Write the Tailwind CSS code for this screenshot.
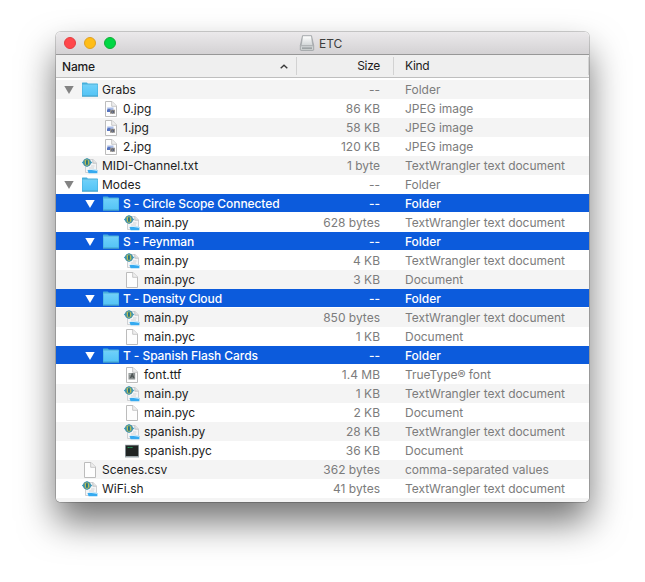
<!DOCTYPE html>
<html lang="en">
<head>
<meta charset="utf-8">
<title>ETC</title>
<script src="https://cdn.jsdelivr.net/npm/@tailwindcss/browser@4"></script>
</head>
<body class="h-[582px] w-[645px] overflow-hidden bg-white pt-8 pl-14 font-['Inter','Liberation_Sans',sans-serif] text-[12px] text-[#1c1c1c]">
<svg class="absolute size-0">
  <linearGradient id="fg" x2="0" y2="1"><stop stop-color="#6dd0fa"/><stop offset="1" stop-color="#55c4f5"/></linearGradient>
  <linearGradient id="dg" x2="0" y2="1"><stop stop-color="#fff"/><stop offset="1" stop-color="#d3d7d8"/></linearGradient>
  <symbol id="folder" viewBox="0 0 18 18"><path d="M1 15.5V2.1Q1 1.5 1.6 1.5H5.5Q6.2 1.5 6.8 2.5H16.2Q17 2.5 17 3.2V15.5Z" fill="#46afdc"/><path d="M1.6 4.3H16.4V14.6H1.6Z" fill="url(#fg)"/><path d="M1.4 4H16.6" stroke="#8edcfb" stroke-width=".7"/><path d="M1 15.2H17" stroke="#469fc8" stroke-width=".8"/></symbol>
  <symbol id="doc" viewBox="0 0 18 18"><path d="M3.5 1.5H10L14.5 6V16.5H3.5Z" fill="#fdfdfd" stroke="#bcbcbc"/><path d="M9.7 1.5V6.3H14.5" fill="#eee" stroke="#c2c2c2" stroke-width=".9"/></symbol>
  <symbol id="jpg" viewBox="0 0 18 18"><use href="#doc"/><path d="M5.2 7.5H11.5V12H5.2Z" fill="#a9bce6"/><path d="M5 9.8L7 8.7 9.5 10V12H5Z" fill="#5673bf"/><path d="M8.5 9.7H13V13.7H8V11Z" fill="#96928e"/><circle cx="10.7" cy="12" r="1.4" fill="#50566a"/><circle cx="10.7" cy="12" r=".6" fill="#aab6ce"/></symbol>
  <symbol id="font" viewBox="0 0 18 18"><use href="#doc"/><path d="M5.5 7H12.2V13.5H5.5Z" fill="#8b9090"/><path d="M7.5 12L9.2 8 11 12M8 10.8H10.5" fill="none" stroke="#4b5252" stroke-width="1.1"/><path d="M6 7.5H8V9H6Z" fill="#a3abab"/></symbol>
  <symbol id="tw" viewBox="0 0 18 18"><path d="M4.5 2.5H12.2L15.5 6V15.5H4.5Z" fill="#f4f5f6" stroke="#c4c7ca" stroke-width=".8"/><path d="M11.8 2.5V6.2H15.3" fill="#e3e3e3" stroke="#b7babd" stroke-width=".8"/><path d="M10 9H13.5M8 11H13" stroke="#c3c8cc" stroke-width=".7"/><path d="M6.5 13H16.4V16.3H7.6Z" fill="#35aaf0"/><path d="M6 13.2L8 12.5 16 13.9V12.6L13 12.2Z" fill="#b5e2fa"/><path d="M6 .9L11.2 5.5 6 10.1.8 5.5Z" fill="#2b9bc8"/><circle cx="6" cy="5.5" r="3.9" fill="#4a94a5"/><path d="M3.7 3.3Q5.7 1.6 8 3.5L8.4 7 6 9 4 7.5Z" fill="#b8bd55"/><path d="M5 3.3H6.9V7.8H5Z" fill="#1f7288"/></symbol>
  <symbol id="term" viewBox="0 0 18 18"><path d="M2 2.7H16V15.5H2Z" fill="#9aa5aa"/><path d="M2.8 3.5H15.2V14H2.8Z" fill="#202423"/><path d="M4.6 5.5H9.5" stroke="#20a55d" stroke-width="1" stroke-dasharray="1.3 .5"/></symbol>
</svg>

<main class="h-[470px] w-[533px] rounded-[5px] shadow-[0_0_0_1px_rgba(0,0,0,0.18),0_20px_36px_rgba(0,0,0,0.55)]">
  <div class="flex h-full flex-col overflow-hidden rounded-[5px] bg-white">
    <header class="grid h-[23px] shrink-0 grid-cols-[244px_1fr] items-center border-b border-[#979797] bg-gradient-to-b from-[#ebe9eb] to-[#d4d2d4]">
      <div class="flex gap-2 pl-2">
        <i class="size-3 rounded-full border border-[#e33e42] bg-[#ff474b]"></i>
        <i class="size-3 rounded-full border border-[#dfa023] bg-[#ffbd17]"></i>
        <i class="size-3 rounded-full border border-[#12ac36] bg-[#00d744]"></i>
      </div>
      <div class="flex items-center">
        <svg class="-ml-px h-4 w-4" viewBox="0 0 16 16"><path d="M3.5.7H12.5L14.7 10.5V14.5Q14.7 15.4 13.8 15.4H2.2Q1.3 15.4 1.3 14.5V10.5Z" fill="#b1b5b7" stroke="#999ea0" stroke-width=".7"/><path d="M4 1.2H12L13.2 10H2.8Z" fill="url(#dg)"/><path d="M1.9 11.3H14.1V14.8H1.9Z" fill="#d0d4d5"/><path d="M3 13.1H13" stroke="#7c8385"/></svg>
        <span class="ml-[4px] pt-[2px] text-[#3d3d3d]">ETC</span>
      </div>
    </header>
    <div class="grid h-[23px] shrink-0 grid-cols-[241px_97px_1fr] items-center border-b border-[#bebebe] bg-[#efefef] font-medium">
      <div class="flex h-[18px] items-center justify-between border-r border-[#d2d2d2] pt-px pr-2 pl-[6px]"><span class="tracking-[-0.2px]">Name</span><svg class="h-[5px] w-2" viewBox="0 0 8 5"><path d="M.7 4.3L4 1.2 7.3 4.3" fill="none" stroke="#393939" stroke-width="1.4"/></svg></div>
      <div class="flex h-[18px] items-center justify-end border-r border-[#d2d2d2] pr-[13px] font-normal tracking-[-0.3px]">Size</div>
      <div class="flex h-[18px] items-center border-r border-[#d2d2d2] pl-[11px] font-normal tracking-[-0.3px]">Kind</div>
    </div>
    <div id="rows" class="pt-[2px]"></div>
    <div class="flex-1 bg-[#f4f4f4]"></div>
  </div>
</main>
<script>
const files = [
  [0,'folder','Grabs','--','Folder'],
  [1,'jpg','0.jpg','86 KB','JPEG image'],
  [1,'jpg','1.jpg','58 KB','JPEG image'],
  [1,'jpg','2.jpg','120 KB','JPEG image'],
  [0,'tw','MIDI-Channel.txt','1 byte','TextWrangler text document'],
  [0,'folder','Modes','--','Folder'],
  [1,'folder','S - Circle Scope Connected','--','Folder',1],
  [2,'tw','main.py','628 bytes','TextWrangler text document'],
  [1,'folder','S - Feynman','--','Folder',1],
  [2,'tw','main.py','4 KB','TextWrangler text document'],
  [2,'doc','main.pyc','3 KB','Document'],
  [1,'folder','T - Density Cloud','--','Folder',1],
  [2,'tw','main.py','850 bytes','TextWrangler text document'],
  [2,'doc','main.pyc','1 KB','Document'],
  [1,'folder','T - Spanish Flash Cards','--','Folder',1],
  [2,'font','font.ttf','1.4 MB','TrueType® font'],
  [2,'tw','main.py','1 KB','TextWrangler text document'],
  [2,'doc','main.pyc','2 KB','Document'],
  [2,'tw','spanish.py','28 KB','TextWrangler text document'],
  [2,'term','spanish.pyc','36 KB','Document'],
  [0,'doc','Scenes.csv','362 bytes','comma-separated values'],
  [0,'tw','WiFi.sh','41 bytes','TextWrangler text document'],
];
const indent = ['pl-[8px]', 'pl-[29px]', 'pl-[50px]'];
document.getElementById('rows').innerHTML = files.map(([lv, icon, name, size, kind, sel], i) => {
  const bg = sel ? 'border-b border-white bg-[#0c5bdc] pt-px font-medium tracking-[-0.08px] text-white' : i % 2 ? 'bg-white' : 'bg-[#f4f4f4]';
  const dim = sel ? 'text-white' : 'text-[#7c7c7c]';
  const tri = icon === 'folder' ? `<svg class="h-[8px] w-[10px]" viewBox="0 0 10 8"><path d="M.3 0H9.7L5 8Z" fill="${sel ? '#fff' : '#838383'}"/></svg>` : '';
  return `<div class="grid h-[19px] grid-cols-[241px_97px_1fr] items-center whitespace-nowrap ${bg}">
    <div class="flex items-center ${indent[lv]}"><span class="w-[10px]">${tri}</span><svg class="ml-[7px] size-[18px]"><use href="#${icon}"/></svg><span class="ml-[3px]">${name}</span></div>
    <div class="pr-[14px] text-right ${dim}">${size}</div>
    <div class="pl-[11px] tracking-[-0.03px] ${dim}">${kind}</div></div>`;
}).join('');
</script>
</body>
</html>
